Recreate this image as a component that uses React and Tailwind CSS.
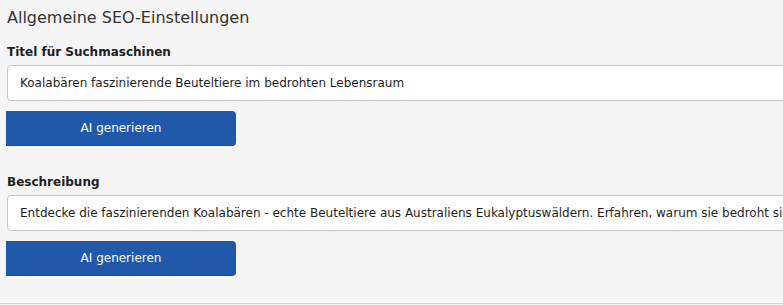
import React from "react";

const fields = [
  {
    label: "Titel für Suchmaschinen",
    value: "Koalabären faszinierende Beuteltiere im bedrohten Lebensraum",
  },
  {
    label: "Beschreibung",
    value:
      "Entdecke die faszinierenden Koalabären - echte Beuteltiere aus Australiens Eukalyptuswäldern. Erfahren, warum sie bedroht sind und wie du helfen kannst.",
  },
];

function Field({ label, value, first }) {
  return (
    <div className={first ? "mt-[15px]" : "mt-[28px]"}>
      <div className="text-[12px] leading-[16px] font-bold text-[#1e1e1e]">{label}</div>
      <div className="mt-[5px] w-[820px] h-[36px] flex items-center px-[12px] bg-white border border-[#c6c6c6] rounded-[4px] text-[12px] text-[#1e1e1e] whitespace-nowrap overflow-hidden">
        {value}
      </div>
      <button className="mt-[10px] -ml-[1px] w-[230px] h-[35px] bg-[#2059aa] text-white text-[12px] rounded-r-[4px] border-b border-[#1b4c93]">
        AI generieren
      </button>
    </div>
  );
}

export default function App() {
  return (
    <div className="w-[783px] h-[305px] overflow-hidden bg-[#f5f5f5] font-['DejaVu_Sans',Verdana,sans-serif]">
      <div className="h-[304px] border-b border-[#d0d0d0] pl-[7px] pt-[7px]">
        <h2 className="text-[16px] leading-[22px] font-normal text-[#333]">
          Allgemeine SEO-Einstellungen
        </h2>
        {fields.map((f, i) => (
          <Field key={f.label} label={f.label} value={f.value} first={i === 0} />
        ))}
      </div>
    </div>
  );
}
